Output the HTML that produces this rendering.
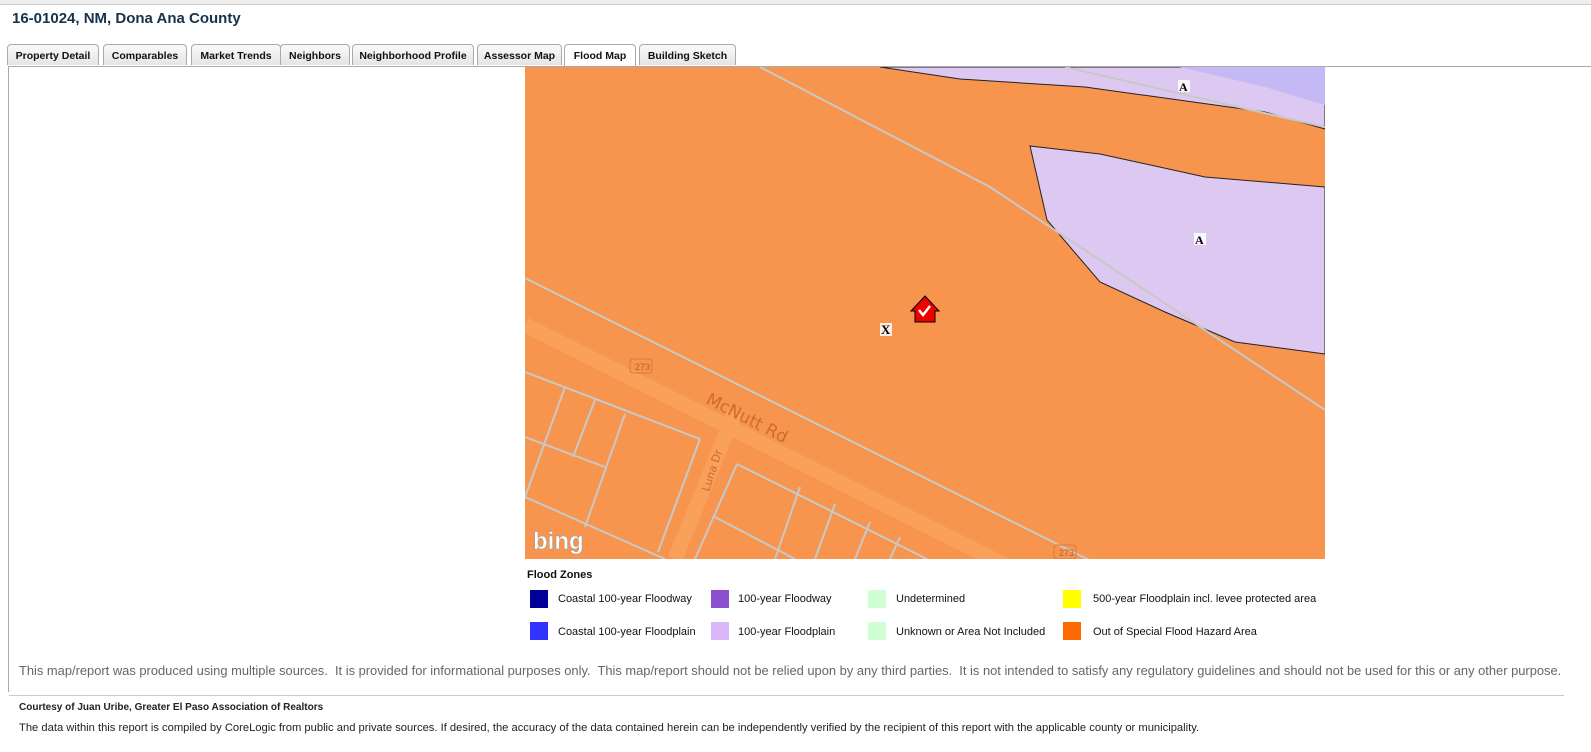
<!DOCTYPE html>
<html><head><meta charset="utf-8"><style>
body{margin:0;background:#fff;font-family:"Liberation Sans",sans-serif;width:1591px;height:752px;overflow:hidden;position:relative}
.top{position:absolute;left:0;top:0;width:1591px;height:4px;border-bottom:1px solid #ccc;background:#eee}
h1{position:absolute;left:12px;top:10px;margin:0;font:bold 15px "Liberation Sans",sans-serif;color:#17324a}
.tabs{position:absolute;left:7px;top:44px;height:23px}
.tab{position:absolute;top:0;height:21px;border:1px solid #aaa;border-bottom:none;border-radius:4px 4px 0 0;background:linear-gradient(#fafafa,#e4e4e4);font:bold 10.5px "Liberation Sans",sans-serif;color:#111;text-align:center;line-height:22px;box-sizing:border-box;white-space:nowrap}
.tab.act{background:#fff;height:23px}
.frame{position:absolute;left:8px;top:66px;width:1583px;height:625px;border-left:1px solid #aaa;border-top:1px solid #aaa}
.leg{position:absolute;font:11px "Liberation Sans",sans-serif;color:#111;white-space:nowrap}
.sw{position:absolute;width:18px;height:18px}
.small{position:absolute;font:10px "Liberation Sans",sans-serif;white-space:nowrap}
</style></head><body>
<div class="top"></div>
<h1>16-01024, NM, Dona Ana County</h1>
<div class="tabs">
<div class="tab" style="left:0;width:92px">Property Detail</div>
<div class="tab" style="left:96px;width:84px">Comparables</div>
<div class="tab" style="left:184px;width:90px">Market Trends</div>
<div class="tab" style="left:273px;width:70px">Neighbors</div>
<div class="tab" style="left:345px;width:122px">Neighborhood Profile</div>
<div class="tab" style="left:470px;width:85px">Assessor Map</div>
<div class="tab act" style="left:557px;width:72px">Flood Map</div>
<div class="tab" style="left:632px;width:97px">Building Sketch</div>
</div>
<div class="frame"></div>
<svg style="position:absolute;left:525px;top:67px" width="800" height="492" viewBox="0 0 800 492">
<rect width="800" height="492" fill="#f7954e"/>
<polygon points="355,0 435,12 560,20 740,45 800,62 800,0" fill="#ddc8f1" stroke="#222" stroke-width="1"/>
<polygon points="655,0 800,0 800,38 740,20" fill="#c5b9f5"/>
<polygon points="505,79 575,87 680,110 800,120 800,287 710,275 640,245 575,215 522,153" fill="#ddc8f1" stroke="#222" stroke-width="1"/>
<g stroke="#f9a05a" stroke-width="15" fill="none"><line x1="0" y1="258" x2="800" y2="658"/><line x1="210" y1="345" x2="150" y2="492"/></g>
<g stroke="#c8c8c8" stroke-width="2" fill="none">
<polyline points="235,0 465,120 800,343"/>
<line x1="540" y1="0" x2="800" y2="60"/>
<line x1="0" y1="211" x2="800" y2="611"/>
<line x1="0" y1="305" x2="175" y2="372"/>
<line x1="175" y1="372" x2="133" y2="485"/>
<line x1="0" y1="370" x2="80" y2="400"/>
<line x1="0" y1="430" x2="140" y2="492"/>
<line x1="40" y1="320" x2="0" y2="430"/>
<line x1="70" y1="333" x2="48" y2="390"/>
<line x1="100" y1="347" x2="60" y2="460"/>
<line x1="212" y1="397" x2="402" y2="492"/>
<line x1="212" y1="397" x2="170" y2="492"/>
<line x1="190" y1="450" x2="270" y2="492"/>
<line x1="275" y1="420" x2="250" y2="492"/>
<line x1="310" y1="437" x2="290" y2="492"/>
<line x1="345" y1="455" x2="330" y2="492"/>
<line x1="375" y1="470" x2="365" y2="492"/>
</g>
<text transform="translate(180,336) rotate(27)" font-family="DejaVu Sans,sans-serif" font-size="17" fill="#d06a30">McNutt Rd</text>
<text transform="translate(184,425) rotate(-72)" font-family="DejaVu Sans,sans-serif" font-size="11" fill="#d06a30">Luna Dr</text>
<rect x="105" y="292" width="22" height="14" rx="3" fill="none" stroke="#d9793e"/><text x="110" y="303" font-size="9" font-family="Liberation Sans,sans-serif" fill="#b8602c">273</text>
<rect x="529" y="478" width="22" height="14" rx="3" fill="none" stroke="#d9793e"/><text x="534" y="489" font-size="9" font-family="Liberation Sans,sans-serif" fill="#b8602c">273</text>
<text x="8" y="482" font-family="Liberation Sans,sans-serif" font-size="24" font-weight="bold" fill="#fff" stroke="#999" stroke-width="0.5">bing</text>
<polygon points="386,244 400,229 414,244 410,244 410,255 390,255 390,244" fill="#e00" stroke="#000"/>
<path d="M394 243l4 5 7-9" stroke="#fff" stroke-width="2.5" fill="none"/>
<rect x="355" y="256" width="12" height="13" fill="#fff" opacity=".85"/><text x="356" y="267" font-family="Liberation Serif,serif" font-size="13" font-weight="bold">X</text>
<rect x="653" y="13" width="12" height="12" fill="#fff" opacity=".85"/><text x="654" y="24" font-family="Liberation Serif,serif" font-size="12" font-weight="bold">A</text>
<rect x="669" y="166" width="12" height="12" fill="#fff" opacity=".85"/><text x="670" y="177" font-family="Liberation Serif,serif" font-size="12" font-weight="bold">A</text>
</svg>
<div class="leg" style="left:527px;top:569px;font-weight:bold">Flood Zones</div>
<div class="sw" style="left:530px;top:590px;background:#000096"></div><div class="leg" style="left:558px;top:593px">Coastal 100-year Floodway</div>
<div class="sw" style="left:711px;top:590px;background:#8b4fcf"></div><div class="leg" style="left:738px;top:593px">100-year Floodway</div>
<div class="sw" style="left:868px;top:590px;background:#cfffd2"></div><div class="leg" style="left:896px;top:593px">Undetermined</div>
<div class="sw" style="left:1063px;top:590px;background:#ffff00"></div><div class="leg" style="left:1093px;top:593px">500-year Floodplain incl. levee protected area</div>
<div class="sw" style="left:530px;top:622px;background:#3333ff"></div><div class="leg" style="left:558px;top:626px">Coastal 100-year Floodplain</div>
<div class="sw" style="left:711px;top:622px;background:#d8b8f8"></div><div class="leg" style="left:738px;top:626px">100-year Floodplain</div>
<div class="sw" style="left:868px;top:622px;background:#cfffd2"></div><div class="leg" style="left:896px;top:626px">Unknown or Area Not Included</div>
<div class="sw" style="left:1063px;top:622px;background:#ff6a00"></div><div class="leg" style="left:1093px;top:626px">Out of Special Flood Hazard Area</div>
<div class="small" style="left:19px;top:663px;font-size:12.9px;color:#666">This map/report was produced using multiple sources.&nbsp; It is provided for informational purposes only.&nbsp; This map/report should not be relied upon by any third parties.&nbsp; It is not intended to satisfy any regulatory guidelines and should not be used for this or any other purpose.</div>
<div style="position:absolute;left:9px;top:695px;width:1555px;border-top:1px solid #ccc"></div>
<div class="small" style="left:19px;top:702px;font-weight:bold;color:#222">Courtesy of Juan Uribe, Greater El Paso Association of Realtors</div>
<div class="small" style="left:19px;top:722px;font-size:11.2px;color:#222">The data within this report is compiled by CoreLogic from public and private sources. If desired, the accuracy of the data contained herein can be independently verified by the recipient of this report with the applicable county or municipality.</div>
</body></html>
